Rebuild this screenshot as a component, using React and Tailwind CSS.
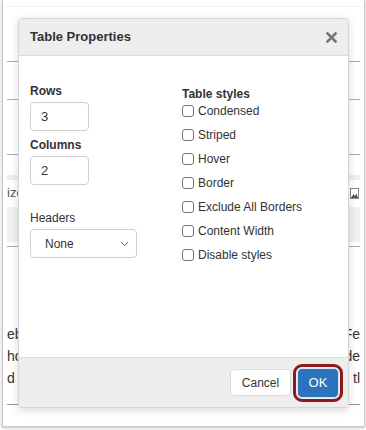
import { useState } from 'react'

const styles = ['Condensed', 'Striped', 'Hover', 'Border', 'Exclude All Borders', 'Content Width', 'Disable styles']

function Line({ className = '' }) {
  return <div className={`h-px bg-[#a3acb7] ${className}`} />
}

function Background() {
  return (
    <div className="ml-[2px] w-[363px] h-[427px] border border-t-0 border-[#c8c8c8] shadow-[0_1px_3px_rgba(0,0,0,0.25)] px-[4px] text-[#333]">
      <div className="h-[6px]" />
      <div className="h-px bg-[#f0f0f0]" />
      <div className="h-[54px]" />
      <Line />
      <div className="h-[37px]" />
      <Line />
      <div className="h-[54px]" />
      <Line />
      <div className="h-[20px]" />
      <div className="h-[5px] bg-[#eeeeee]" />
      <div className="h-[27px] flex items-center justify-between">
        <span className="text-[13px] text-[#555] -mt-[1px]">ize</span>
        <svg width="9" height="11" viewBox="0 0 9 11" className="mr-[1px]">
          <rect x="0.5" y="0.5" width="8" height="10" fill="#fff" stroke="#888" />
          <path d="M1 10 L3.5 6 L5 8 L6.5 5.5 L8 10 Z" fill="#555" />
        </svg>
      </div>
      <div className="h-[35px] bg-[#f0f0f0]" />
      <div className="h-[4px]" />
      <Line />
      <div className="h-[76px]" />
      <div className="text-[14px] leading-[22px]">
        <div className="flex justify-between"><span>eb</span><span>Fe</span></div>
        <div className="flex justify-between"><span>ho</span><span>de</span></div>
        <div className="flex justify-between"><span>d</span><span>tl</span></div>
      </div>
      <div className="h-[15px]" />
      <div className="h-px bg-[#9a9a9a]" />
    </div>
  )
}

function Dialog() {
  const [checked, setChecked] = useState({})
  return (
    <div className="absolute left-[18px] top-[18px] w-[331px] h-[390px] flex flex-col bg-white border border-[#d6d6d6] rounded-[4px] shadow-[0_2px_8px_rgba(0,0,0,0.15)] overflow-hidden text-[#333]">
      <div className="h-[37px] shrink-0 bg-[#eeeeee] border-b border-[#dcdcdc] flex items-center justify-between pl-[11px] pr-[11px]">
        <span className="text-[13px] font-bold">Table Properties</span>
        <svg width="11" height="11" viewBox="0 0 11 11">
          <path d="M1.5 1.5 L9.5 9.5 M9.5 1.5 L1.5 9.5" stroke="#777" strokeWidth="2.6" strokeLinecap="square" />
        </svg>
      </div>
      <div className="flex-1 flex pl-[11px]">
        <div className="w-[152px] flex flex-col">
          <div className="mt-[28px] text-[12px] leading-[14px] font-bold">Rows</div>
          <div className="mt-[4px] w-[59px] h-[29px] border border-[#cfcfcf] rounded-[4px] flex items-center pl-[10px] text-[13px]">3</div>
          <div className="mt-[7px] text-[12px] leading-[14px] font-bold">Columns</div>
          <div className="mt-[4px] w-[59px] h-[29px] border border-[#cfcfcf] rounded-[4px] flex items-center pl-[10px] text-[13px]">2</div>
          <div className="mt-[26px] text-[12px] leading-[14px]">Headers</div>
          <div className="mt-[4px] w-[107px] h-[29px] border border-[#cfcfcf] rounded-[4px] flex items-center justify-between pl-[14px] pr-[7px] text-[12px]">
            <span>None</span>
            <svg width="9" height="6" viewBox="0 0 9 6">
              <path d="M1 1 L4.5 4.5 L8 1" stroke="#666" strokeWidth="1" fill="none" />
            </svg>
          </div>
        </div>
        <div className="flex flex-col">
          <div className="mt-[31px] text-[12px] leading-[14px] font-bold">Table styles</div>
          <div className="-mt-[2px] flex flex-col">
            {styles.map((s) => (
              <label key={s} className="h-[24px] flex items-center gap-[4px] text-[12px]">
                <span
                  onClick={() => setChecked({ ...checked, [s]: !checked[s] })}
                  className="w-[12px] h-[12px] border border-[#767676] rounded-[3px] bg-white"
                />
                <span>{s}</span>
              </label>
            ))}
          </div>
        </div>
      </div>
      <div className="h-[50px] shrink-0 bg-[#eeeeee] border-t border-[#dcdcdc] flex items-center justify-end gap-[6px] pr-[9px]">
        <button className="w-[61px] h-[27px] bg-white border border-[#dddddd] rounded-[4px] text-[12px] text-[#333]">Cancel</button>
        <button className="w-[42px] h-[30px] bg-[#2b73bd] border border-[#d9e6f2] rounded-[5px] text-[13px] text-white outline-[3px] outline-solid outline-[#8e1b1b] outline-offset-[1px]">OK</button>
      </div>
    </div>
  )
}

export default function App() {
  return (
    <div className="relative w-[366px] h-[430px] bg-white overflow-hidden font-['Liberation_Sans',Arial,sans-serif]">
      <Background />
      <Dialog />
    </div>
  )
}
